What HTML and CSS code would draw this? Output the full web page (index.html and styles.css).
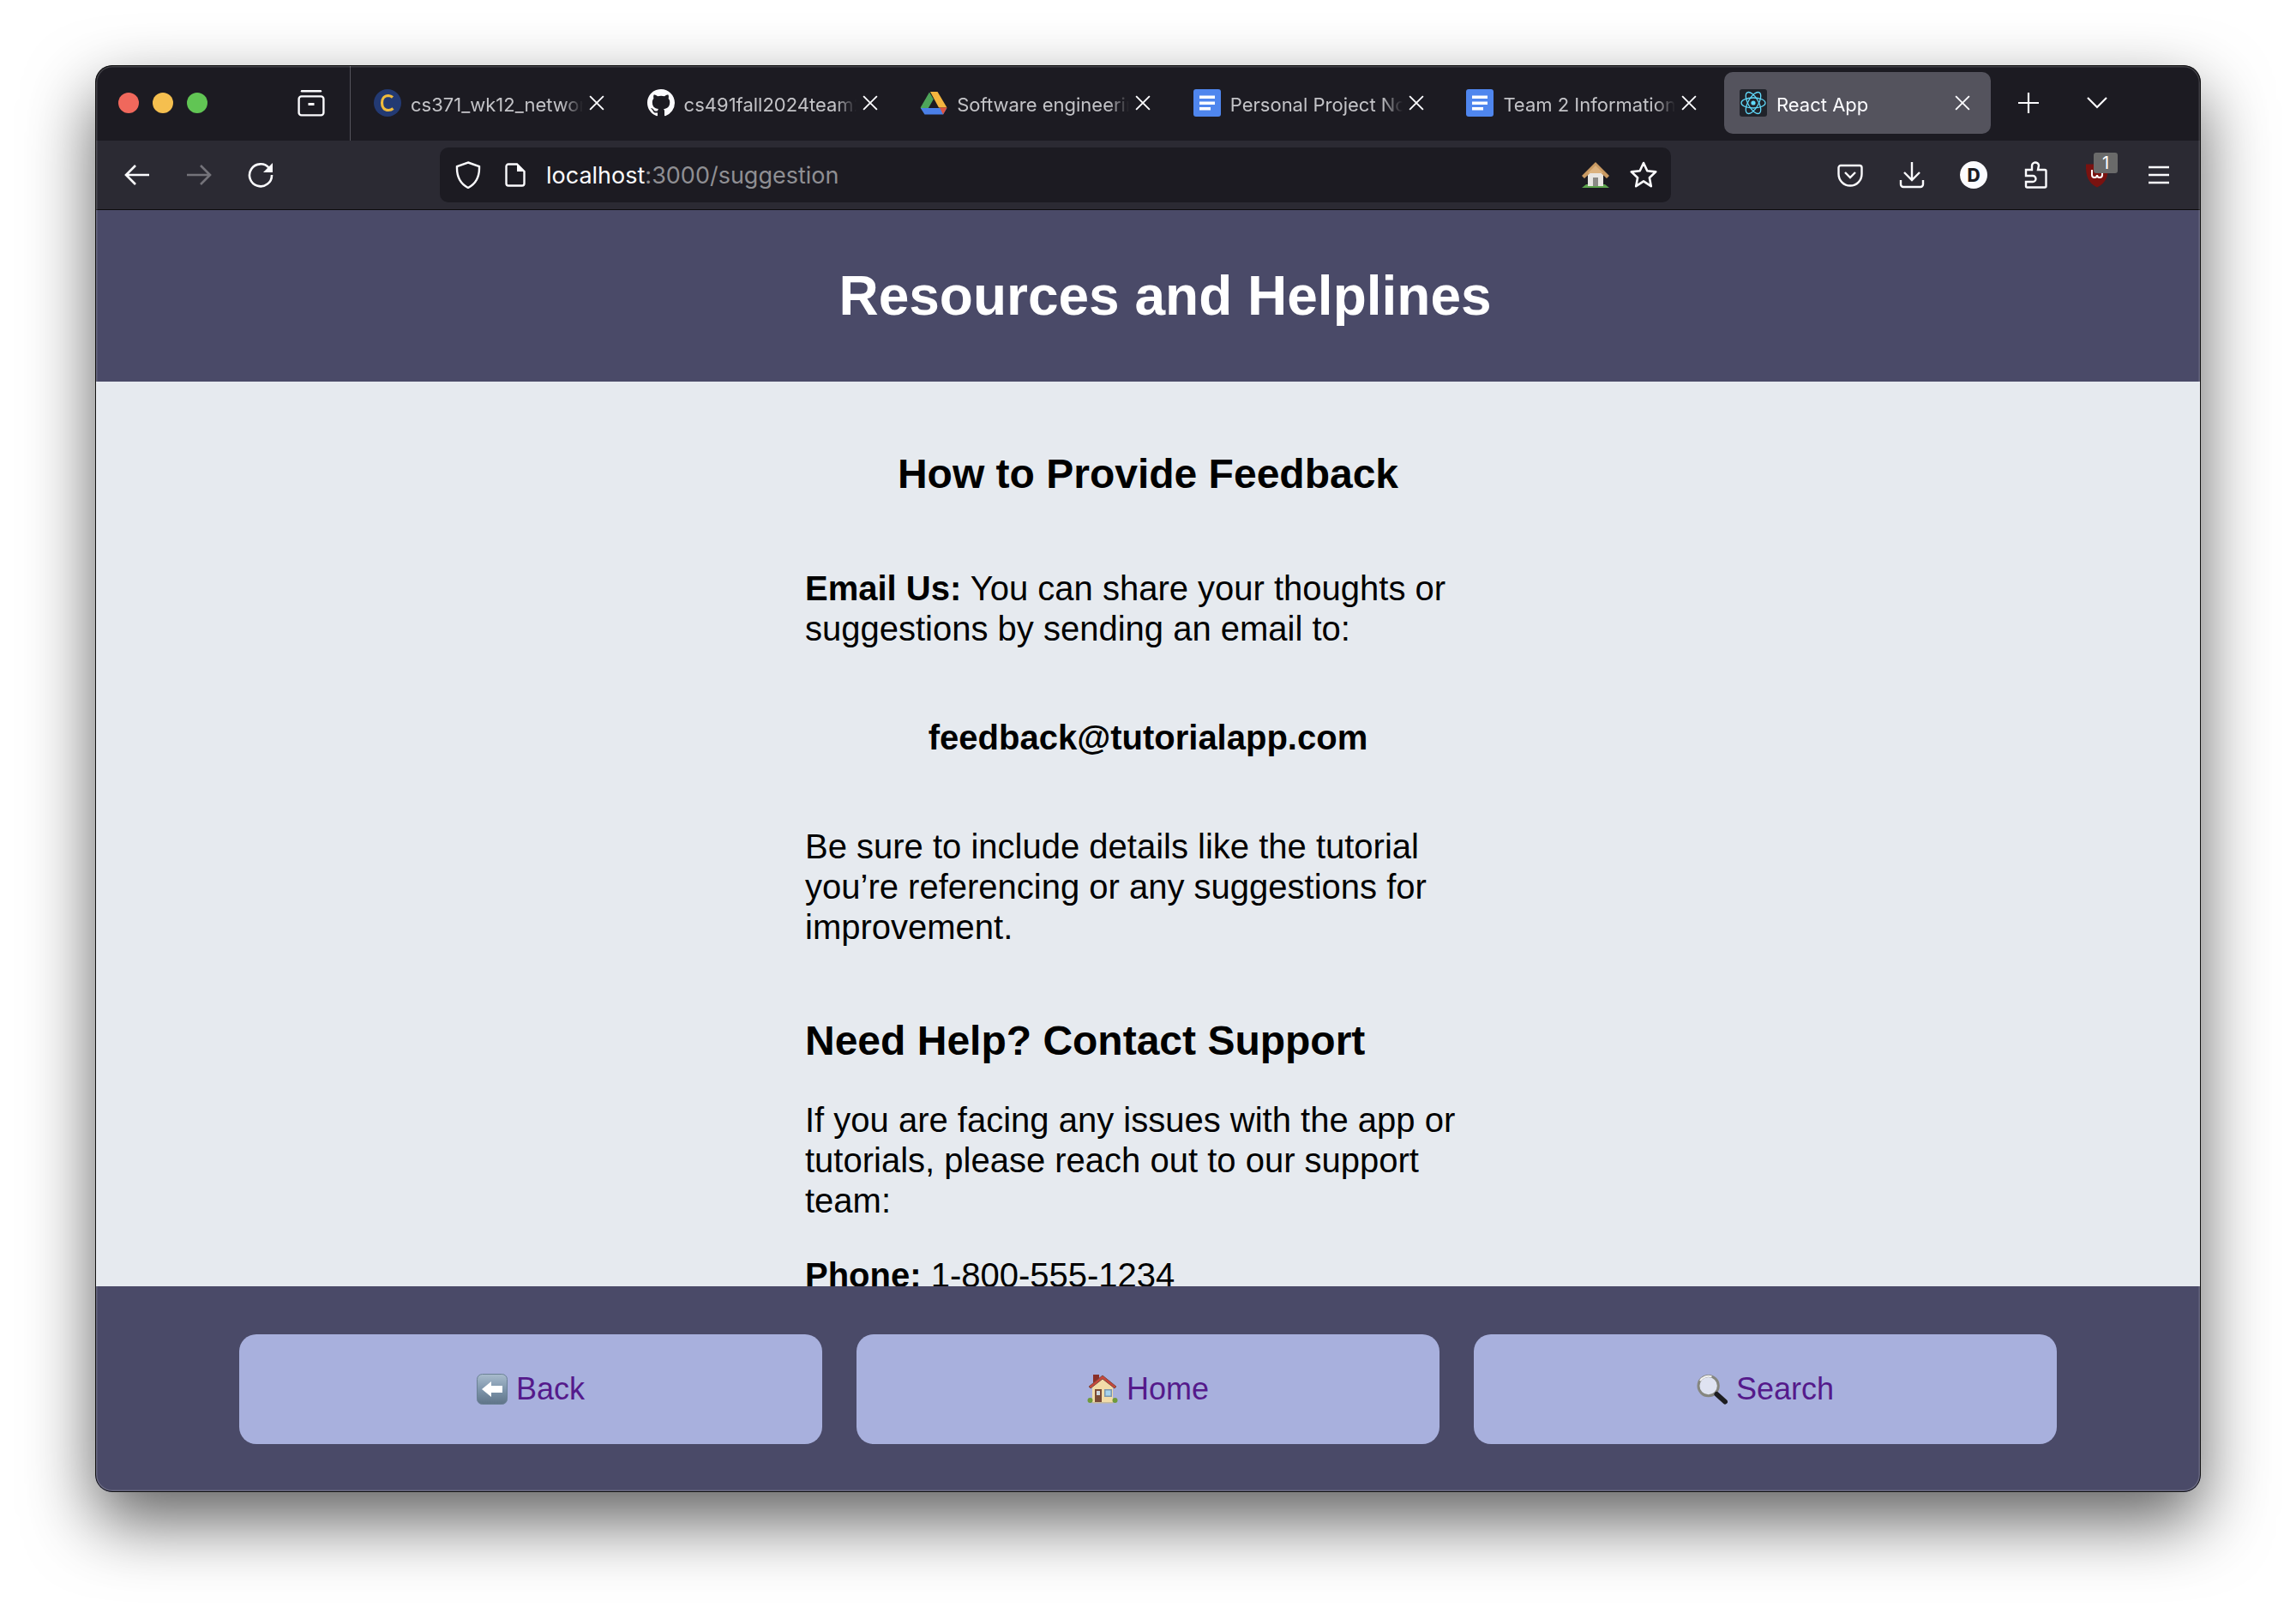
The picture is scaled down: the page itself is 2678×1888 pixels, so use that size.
FILE: index.html
```html
<!DOCTYPE html>
<html lang="en">
<head>
<meta charset="utf-8">
<title>React App</title>
<link rel="stylesheet" href="styles.css">
</head>
<body>
<div class="window">
  <div class="tabbar">
    <div class="traffic">
      <span class="dot red"></span><span class="dot yellow"></span><span class="dot green"></span>
    </div>
    <svg class="fxview" viewBox="0 0 32 32" fill="none" stroke="#fbfbfe" stroke-width="2.4"><path d="M5 2.2h22" stroke-linecap="round"/><rect x="1.6" y="8.4" width="28.8" height="22" rx="3"/><path d="M12.5 17.5h7" stroke-width="3"/></svg>
    <div class="tabs">
      <div class="tab">
        <svg class="ico" viewBox="0 0 32 32"><ellipse cx="16" cy="16" rx="16" ry="16" fill="#233a73"/><path d="M22 9.5a8 8 0 0 0-5-2c-5 0-7.500 4-7.500 8.500s2.500 8.500 7.500 8.500a8 8 0 0 0 5.500-2" fill="none" stroke="#f0bb3c" stroke-width="3.200"/></svg>
        <span class="title">cs371_wk12_network_programming</span>
        <svg class="close" viewBox="0 0 16 16"><path d="M1 1l14 14M15 1L1 15"/></svg>
      </div>
      <div class="tab">
        <svg class="ico" viewBox="0 0 16 16"><path fill="#fbfbfe" d="M8 0C3.58 0 0 3.58 0 8c0 3.54 2.290 6.530 5.470 7.590.4.070.55-.17.55-.38 0-.19-.01-.82-.01-1.490-2.010.37-2.530-.49-2.690-.94-.09-.23-.48-.94-.82-1.130-.28-.15-.68-.52-.01-.53.63-.01 1.080.58 1.230.82.72 1.210 1.870.87 2.330.66.070-.52.28-.87.51-1.070-1.780-.2-3.640-.89-3.640-3.950 0-.87.31-1.590.82-2.150-.08-.2-.36-1.020.08-2.120 0 0 .67-.21 2.200.82.64-.18 1.320-.27 2-.27.68 0 1.360.09 2 .27 1.530-1.040 2.200-.82 2.200-.82.44 1.100.16 1.920.08 2.120.51.56.82 1.270.82 2.150 0 3.070-1.870 3.750-3.650 3.950.29.25.54.73.54 1.480 0 1.070-.01 1.930-.01 2.200 0 .21.15.46.55.38A8.013 8.013 0 0 0 16 8c0-4.420-3.580-8-8-8z"/></svg>
        <span class="title">cs491fall2024team2/project</span>
        <svg class="close" viewBox="0 0 16 16"><path d="M1 1l14 14M15 1L1 15"/></svg>
      </div>
      <div class="tab">
        <svg class="ico" viewBox="0 0 32 32"><path fill="#f4b63f" d="M12 3h8.500l11 18.500H22z"/><path fill="#4ea45a" d="M11 3.500l4.800 8.300L5.800 29 .6 21.500z"/><path fill="#4a7fe8" d="M7 22h24.500l-4.500 7.500H5.500L.8 22z"/><path fill="#dd5440" d="M23 21.500h8.500L27 29.500z"/></svg>
        <span class="title">Software engineering notes</span>
        <svg class="close" viewBox="0 0 16 16"><path d="M1 1l14 14M15 1L1 15"/></svg>
      </div>
      <div class="tab">
        <svg class="ico" viewBox="0 0 32 32"><rect width="32" height="32" rx="3" fill="#4f86ee"/><path fill="#fff" d="M7 7.500h18v3.500H7zM7 14.500h18V18H7zM7 21h13v3.500H7z"/></svg>
        <span class="title">Personal Project Notes</span>
        <svg class="close" viewBox="0 0 16 16"><path d="M1 1l14 14M15 1L1 15"/></svg>
      </div>
      <div class="tab">
        <svg class="ico" viewBox="0 0 32 32"><rect width="32" height="32" rx="3" fill="#4f86ee"/><path fill="#fff" d="M7 7.500h18v3.500H7zM7 14.500h18V18H7zM7 21h13v3.500H7z"/></svg>
        <span class="title">Team 2 Information Sheet</span>
        <svg class="close" viewBox="0 0 16 16"><path d="M1 1l14 14M15 1L1 15"/></svg>
      </div>
      <div class="tab active">
        <svg class="ico" viewBox="0 0 32 32"><rect width="32" height="32" rx="3" fill="#20232a"/><g fill="none" stroke="#61dafb" stroke-width="1.300"><ellipse cx="16" cy="16" rx="14" ry="6"/><ellipse cx="16" cy="16" rx="14" ry="6" transform="rotate(60 16 16)"/><ellipse cx="16" cy="16" rx="14" ry="6" transform="rotate(120 16 16)"/></g><circle cx="16" cy="16" r="2.600" fill="#61dafb"/></svg>
        <span class="title">React App</span>
        <svg class="close" viewBox="0 0 16 16"><path d="M1 1l14 14M15 1L1 15"/></svg>
      </div>
    </div>
    <svg class="plus" viewBox="0 0 26 26"><path d="M13 1v24M1 13h24"/></svg>
    <svg class="chev" viewBox="0 0 24 14"><path d="M1 1l11 11L23 1"/></svg>
  </div>

  <div class="toolbar">
    <div class="tool-group">
      <svg class="tool" viewBox="0 0 32 32"><path d="M30 16H4M14 5L3 16l11 11"/></svg>
      <svg class="tool dim" viewBox="0 0 32 32"><path d="M2 16h26M18 5l11 11-11 11"/></svg>
      <svg class="tool" viewBox="0 0 32 32"><path d="M26 8a13 13 0 1 0 3 8"/><path class="fill" d="M30 2v11H19z"/></svg>
    </div>
    <div class="urlbar">
      <svg class="shield" viewBox="0 0 30 32"><path d="M15 1.500L28 6c.5 12-3 20-13 25C5 26 1.500 18 2 6z"/></svg>
      <svg class="page" viewBox="0 0 24 28"><path d="M4 1.500h10l8.500 8.500v14a2.500 2.500 0 0 1-2.500 2.500H4A2.500 2.500 0 0 1 1.500 24V4A2.500 2.500 0 0 1 4 1.500z"/><path class="fill" d="M14 1.500l8.500 8.500H14z"/></svg>
      <span class="url">localhost<span class="url-dim">:3000/suggestion</span></span>
      <svg class="fav" viewBox="0 0 32 30"><path fill="#5da34d" d="M0 30l5-4h22l5 4z"/><path fill="#e8e6e2" d="M7 13h18v15H7z"/><path fill="#8b8a86" d="M13 18h6v10h-6z"/><path fill="#c99a63" d="M16 0l16 16-3 3L16 7 3 19l-3-3z"/><path fill="#dcb27e" d="M16 4l-9 9h18z"/></svg>
      <svg class="star" viewBox="0 0 32 32"><path d="M16 2l4.300 9.200 9.900 1.200-7.300 6.900 1.900 9.900L16 23.300l-8.800 5.900 1.900-9.900-7.300-6.900 9.900-1.200z"/></svg>
    </div>
    <div class="tool-group">
      <svg class="tool thin" viewBox="0 0 32 32"><path d="M5 5h22a2.500 2.500 0 0 1 2.500 2.500V15a13.500 13.500 0 0 1-27 0V7.500A2.500 2.500 0 0 1 5 5z"/><path d="M10 13l6 6 6-6"/></svg>
      <svg class="tool thin" viewBox="0 0 32 32"><path d="M16 1v21M7 13l9 9 9-9M3 22v5a3 3 0 0 0 3 3h20a3 3 0 0 0 3-3v-5"/></svg>
      <span class="avatar">D</span>
      <svg class="tool thin" viewBox="0 0 32 32"><path d="M5 10h7V6a4 4 0 0 1 8-1l-1 5h8a1.500 1.500 0 0 1 1.500 1.500V29a1.500 1.500 0 0 1-1.500 1.500H6.500A1.500 1.500 0 0 1 5 29v-5h8a3.500 3.500 0 0 0 0-7H5z"/></svg>
      <span class="ublock">
        <svg class="ublock-shield" viewBox="0 0 28 30"><path fill="#7a1210" d="M1 1.500h26c.5 14-3 22-13 27C4 23.500.5 15.500 1 1.500z"/><path fill="none" stroke="#fff" stroke-width="2" d="M8 8v6a3 3 0 0 0 6 0 3 3 0 0 0 6 0V8"/></svg>
        <span class="badge">1</span>
      </span>
      <svg class="tool menu" viewBox="0 0 32 32"><path d="M4 7h24M4 16h24M4 25h24"/></svg>
    </div>
  </div>

  <header class="page-header"><h1>Resources and Helplines</h1></header>

  <main class="content">
    <section class="column">
      <h2 class="center">How to Provide Feedback</h2>
      <p class="lead"><strong>Email Us:</strong> You can share your thoughts or suggestions by sending an email to:</p>
      <p class="email"><strong>feedback@tutorialapp.com</strong></p>
      <p class="lead last">Be sure to include details like the tutorial you’re referencing or any suggestions for improvement.</p>
      <h2 class="support">Need Help? Contact Support</h2>
      <p>If you are facing any issues with the app or tutorials, please reach out to our support team:</p>
      <p><strong>Phone:</strong> 1-800-555-1234</p>
    </section>
  </main>

  <footer class="page-footer">
    <a class="btn">
      <svg class="emoji" viewBox="0 0 36 36"><defs><linearGradient id="bk" x1="0" y1="0" x2="0" y2="1"><stop offset="0" stop-color="#a9bccd"/><stop offset=".5" stop-color="#7f96ac"/><stop offset="1" stop-color="#5f7488"/></linearGradient></defs><rect x=".5" y=".5" width="35" height="35" rx="6" fill="url(#bk)" stroke="#6b8196"/><path fill="#fff" d="M6 18L17 9v5h13v8H17v5z"/></svg>
      Back
    </a>
    <a class="btn">
      <svg class="emoji" viewBox="0 0 36 36"><path fill="#8b2f27" d="M7 1h7v10H7z"/><path fill="#f2dca8" d="M6 15L18 5l12 10v18H6z"/><path fill="#c9463a" stroke="#7b4a40" stroke-width="1" d="M2 15L18 2l16 13-2 2L18 6 4 17z"/><path fill="#7a4a36" d="M9 18h8v15H9z"/><path fill="#cfd8df" d="M11 20h4v5h-4z"/><path fill="#7b97ad" d="M20 18h9v9h-9z"/><path fill="#a6d3ef" d="M21.500 19.500h6v6h-6z"/><circle cx="3.500" cy="31" r="3" fill="#6f9a3c"/><circle cx="32.500" cy="31" r="3" fill="#6f9a3c"/><path fill="#c7bc9c" d="M6 33h24v1.500H6z"/></svg>
      Home
    </a>
    <a class="btn">
      <svg class="emoji" viewBox="0 0 37 36"><circle cx="14" cy="14" r="12" fill="#dfe3f1" stroke="#85867f" stroke-width="3"/><path d="M4 8a12 12 0 0 1 14-5" fill="none" stroke="#f2f2f2" stroke-width="2"/><path d="M24 24l10 9" stroke="#1d1d20" stroke-width="6" stroke-linecap="round"/></svg>
      Search
    </a>
  </footer>
  <div class="window-edge"></div>
</div>
</body>
</html>
```

FILE: styles.css
```css
* { box-sizing: border-box; }
html, body { margin: 0; height: 100%; }
body {
  background: #fff;
  padding: 76px 111px 0;
  overflow: hidden;
  font-family: "Liberation Sans", Arial, sans-serif;
  color: #000;
}
.window {
  position: relative;
  width: 2456px;
  height: 1664px;
  border-radius: 20px;
  overflow: hidden;
  display: flex;
  flex-direction: column;
}
body::before {
  content: "";
  position: absolute;
  left: 111px;
  top: 76px;
  width: 2456px;
  height: 1664px;
  border-radius: 20px;
  box-shadow: 0 34px 80px rgba(0, 0, 0, .62);
}
.window-edge {
  position: absolute;
  inset: 0;
  border-radius: 20px;
  border: 1px solid #111;
  box-shadow: inset 0 0 0 1.5px rgba(255, 255, 255, .16);
  pointer-events: none;
}

/* tab bar */
.tabbar {
  height: 88px;
  flex: none;
  background: #1c1b22;
  display: flex;
  align-items: center;
  font-family: Inter, "Noto Sans", sans-serif;
}
.traffic { display: flex; gap: 16px; padding-left: 27px; width: 236px; }
.dot { width: 24px; height: 24px; border-radius: 50%; }
.red { background: #f0685c; }
.yellow { background: #f5bf4f; }
.green { background: #61c554; }
.fxview { width: 32px; height: 32px; flex: none; }
.tabs {
  display: flex;
  gap: 7.6px;
  height: 100%;
  margin-left: 39px;
  padding: 8px 0;
  position: relative;
}
.tabs::before {
  content: "";
  position: absolute;
  left: -10px;
  top: 0;
  bottom: 0;
  width: 1px;
  background: #55545c;
}
.tab {
  width: 311px;
  height: 72px;
  flex: none;
  display: flex;
  align-items: center;
  padding: 0 24px 0 18px;
  border-radius: 10px;
}
.tab.active { background: #54535d; }
.ico { width: 32px; height: 32px; flex: none; }
.title {
  width: 201px;
  margin-left: 11px;
  margin-right: 7px;
  padding-top: 3px;
  white-space: nowrap;
  overflow: hidden;
  font-size: 22px;
  color: #c3c3c7;
  -webkit-mask-image: linear-gradient(90deg, #000 88%, transparent);
  mask-image: linear-gradient(90deg, #000 88%, transparent);
}
.tab.active .title { color: #fbfbfe; }
.close { width: 18px; height: 18px; flex: none; fill: none; stroke: #fbfbfe; stroke-width: 1.700; }
.plus { width: 26px; height: 26px; flex: none; margin-left: 31px; fill: none; stroke: #fbfbfe; stroke-width: 2.200; }
.chev { width: 24px; height: 14px; flex: none; margin-left: 55px; fill: none; stroke: #fbfbfe; stroke-width: 2.200; }

/* toolbar */
.toolbar {
  height: 81px;
  flex: none;
  background: #2b2a33;
  border-bottom: 1px solid #0c0c0d;
  display: flex;
  align-items: center;
  padding: 0 33px;
  font-family: Inter, "Noto Sans", sans-serif;
}
.tool-group { display: flex; align-items: center; gap: 40px; }
.tool { width: 32px; height: 32px; flex: none; fill: none; stroke: #fbfbfe; stroke-width: 2.600; }
.tool.thin { stroke-width: 2.400; }
.tool.dim { stroke: #74737a; }
.fill { fill: #fbfbfe; stroke: none; }
.menu { stroke-width: 2.400; }
.urlbar {
  flex: 1;
  height: 64px;
  margin: 0 193px 0 193px;
  background: #1c1b22;
  border-radius: 10px;
  display: flex;
  align-items: center;
  padding: 0 16px 0 18px;
}
.shield { width: 30px; height: 32px; flex: none; fill: none; stroke: #fbfbfe; stroke-width: 2.400; }
.page { width: 24px; height: 28px; flex: none; margin-left: 28px; fill: none; stroke: #fbfbfe; stroke-width: 2.400; }
.url { font-size: 27px; color: #fbfbfe; margin-left: 24px; flex: 1; padding-top: 1px; }
.url-dim { color: #8f8f93; }
.fav { width: 32px; height: 30px; flex: none; }
.star { width: 32px; height: 32px; flex: none; margin-left: 24px; fill: none; stroke: #fbfbfe; stroke-width: 2.600; stroke-linejoin: round; }
.avatar {
  width: 32px;
  height: 32px;
  flex: none;
  border-radius: 50%;
  background: #fbfbfe;
  color: #1c1b22;
  font-size: 21px;
  font-weight: 800;
  display: flex;
  align-items: center;
  justify-content: center;
}
.ublock { position: relative; width: 32px; height: 32px; flex: none; display: flex; justify-content: center; align-items: flex-end; }
.ublock-shield { width: 28px; height: 30px; }
.badge {
  position: absolute;
  left: 12px;
  top: -10px;
  width: 28px;
  height: 24px;
  border-radius: 3px;
  background: #6a6a6a;
  color: #fff;
  font-size: 20px;
  line-height: 24px;
  text-align: center;
}

/* page */
.page-header {
  height: 200px;
  flex: none;
  background: #4a4a68;
  color: #fff;
  display: flex;
  align-items: center;
  justify-content: center;
  padding-left: 40px;
}
h1 { margin: 0; font-size: 64px; font-weight: 700; }
.content {
  flex: 1;
  min-height: 0;
  background: #e6eaef;
  overflow: hidden;
  display: flex;
  justify-content: center;
  padding-top: 80px;
}
.column { width: 800px; }
h2 { margin: 0; font-size: 48px; line-height: 55px; font-weight: 700; }
.center { text-align: center; margin-bottom: 83px; }
.support { margin: 81px 0 42px; }
p { margin: 0 0 40px; font-size: 40px; line-height: 47px; }
.lead { margin-bottom: 80px; }
.lead.last { margin-bottom: 0; }
.email { text-align: center; margin-bottom: 80px; }
.page-footer {
  height: 240px;
  flex: none;
  background: #4a4a68;
  display: flex;
  gap: 40px;
  align-items: center;
  padding: 0 168px;
}
.btn {
  flex: 1;
  height: 128px;
  background: #a8b0dd;
  border-radius: 20px;
  color: #551a8b;
  font-size: 36px;
  display: flex;
  align-items: center;
  justify-content: center;
  gap: 10px;
}
.emoji { width: 36px; height: 36px; flex: none; }
```
